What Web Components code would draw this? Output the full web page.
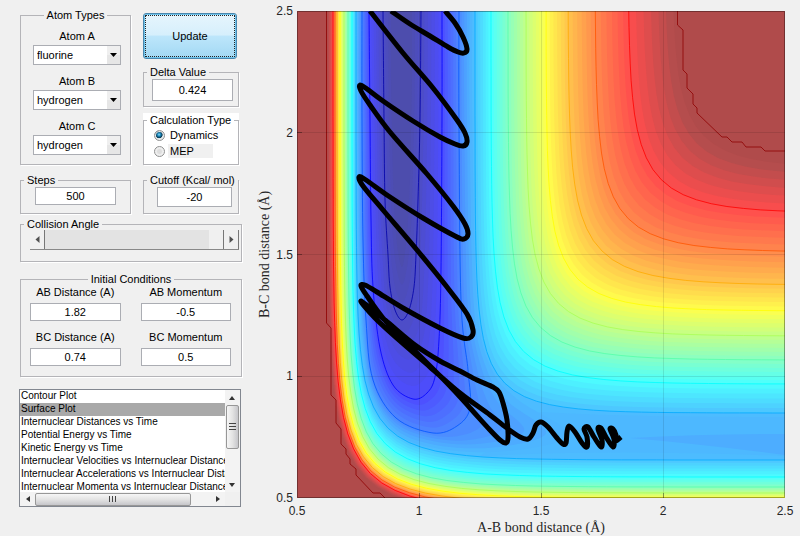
<!DOCTYPE html>
<html lang="en">
<head>
<meta charset="utf-8">
<title>Atom dynamics</title>
<style>
body { margin: 0; background: #f0f0f0; color: #000; font: 11px/12px "Liberation Sans", Arial, sans-serif; }
</style>
</head>
<body>
<dynamics-app></dynamics-app>
<script>
const define = (name, html, setup) => customElements.define(name, class extends HTMLElement {
  connectedCallback() {
    if (this.shadowRoot) return;
    const root = this.attachShadow({ mode: 'open' });
    const tpl = document.createElement('template');
    tpl.innerHTML = '<style>*{box-sizing:border-box}:host([hidden]){display:none}input,select,button{font:inherit;color:inherit;margin:0}</style>' +
      (typeof html === 'function' ? html(this) : html);
    root.append(tpl.content.cloneNode(true));
    if (setup) setup(root, this);
  }
});

define('group-box', el => `
<style>
:host { display: block; }
fieldset { margin: 0; padding: 0; min-width: 0; height: 100%; border: 1px solid #b4b4b8; box-shadow: 1px 1px 0 #fff; }
legend { padding: 0 3px; margin-left: 3px; line-height: 12px; white-space: nowrap; }
:host([center]) legend { margin: 0 auto; }
</style>
<fieldset><legend>${el.getAttribute('legend')}</legend><slot></slot></fieldset>`);

define('number-field', el => `
<style>
:host { display: flex; flex-direction: column; gap: 5px; }
label { text-align: center; white-space: nowrap; }
input { width: 100%; height: var(--field-height, 18px); border: 1px solid #abadb3; background: #fff; text-align: center; padding: 0; border-radius: 0; }
</style>
${el.hasAttribute('label') ? `<label for="f">${el.getAttribute('label')}</label>` : ''}
<input id="f" type="text" value="${el.getAttribute('value')}"${el.hasAttribute('name') ? ` aria-label="${el.getAttribute('name')}"` : ''}>`);

define('atom-picker', el => `
<style>
:host { display: flex; flex-direction: column; gap: 3px; }
label { text-align: center; }
.box { display: grid; }
.box > * { grid-area: 1 / 1; }
select { appearance: none; width: 100%; height: 20px; border: 1px solid #abadb3; border-radius: 0; background: #fff; padding: 0 16px 0 3px; }
svg { justify-self: end; align-self: center; margin-right: 1px; width: 13px; height: 18px; pointer-events: none; }
</style>
<label for="s">${el.getAttribute('label')}</label>
<div class="box"><select id="s">${['fluorine', 'hydrogen'].map(a => `<option${a === el.getAttribute('value') ? ' selected' : ''}>${a}</option>`).join('')}</select>
<svg viewBox="0 0 13 18"><rect width="13" height="18" fill="#e6e6e6"/><rect width="13" height="9" fill="#efefef"/><path d="M3 7h7L6.500 11z" fill="#000"/></svg></div>`);

define('push-button', `
<style>
:host { display: block; }
button { display: block; width: 100%; height: 46px; border: 1px solid #4a87ae; border-radius: 3px; padding: 1px;
  background: linear-gradient(#e6f5fd 0%, #d6effc 48%, #bde6fb 50%, #a2d8f3 100%); box-shadow: inset 0 0 0 1px #6fc4ec; }
span { display: grid; place-items: center; height: 100%; border: 1px dotted #222; }
</style>
<button type="button"><span><slot></slot></span></button>`);

define('calc-choice', `
<style>
:host { display: flex; flex-direction: column; gap: 2px; padding: 2px 0 6px 8px; }
label { display: flex; align-items: center; gap: 5px; width: 61px; height: 14px; padding-left: 2px; white-space: nowrap; }
label.off { background: linear-gradient(90deg, #fff 16px, #f0f0f0 16px); }
input { appearance: none; flex: none; width: 11px; height: 11px; border: 1px solid #8e8f8f; border-radius: 50%; background: radial-gradient(circle, #ddd 30%, #fff 70%); box-shadow: inset 0 0 0 1px #eee; }
input:checked { background: radial-gradient(circle at 45% 40%, #8fe0ff 0, #1b86b9 22%, #083850 44%, #dfe6ea 54%); }
</style>
<label><input type="radio" name="calc" checked>Dynamics</label>
<label class="off"><input type="radio" name="calc">MEP</label>`);

define('angle-slider', `
<style>
:host { display: flex; height: 20px; border-bottom: 1px solid #888; }
button { flex: none; width: 15px; padding: 0; border: 0; border-right: 1px solid #777; background: #f0f0f0; display: grid; place-items: center; }
svg { width: 5px; height: 8px; }
input { appearance: none; flex: 1; min-width: 0; height: 19px; background: #e3e3e3; border-radius: 0; }
input::-webkit-slider-thumb { appearance: none; width: 15px; height: 19px; background: #f0f0f0; border-right: 1px solid #777; }
</style>
<button type="button" aria-label="Decrease angle"><svg viewBox="0 0 5 8"><path d="M4.500 0v7L.5 3.500z" fill="#505050"/></svg></button>
<input type="range" min="0" max="180" value="180" aria-label="Collision Angle">
<button type="button" aria-label="Increase angle"><svg viewBox="0 0 5 8"><path d="M.5 0v7l4-3.500z" fill="#505050"/></svg></button>`);

define('plot-list', `
<style>
:host { display: grid; grid-template-columns: 1fr 15px; grid-template-rows: 102px 14px; border: 1px solid #828790; background: #fff; }
.view { overflow: hidden; }
select { display: block; width: 100%; height: 104px; border: 0; border-radius: 0; padding: 0; background: #fff; overflow: hidden; outline: 0; scrollbar-width: none; }
option { min-height: 13px; height: 13px; font-size: 10px; line-height: 13px; padding: 0 0 0 1px; white-space: nowrap; color: #000; }
option:checked { background: #a9a9a9 linear-gradient(#a9a9a9, #a9a9a9); color: #000; }
.v, .h { display: flex; align-items: center; background: #f3f3f3; }
.v { flex-direction: column; }
.corner { background: #f0f0f0; }
.end { flex: none; display: grid; place-items: center; width: 15px; height: 15px; padding: 0; border: 0; background: none; }
.thumb { display: grid; place-items: center; border: 1px solid #979797; border-radius: 2px; }
.v .thumb { width: 13px; height: 44px; background: linear-gradient(90deg, #f6f6f6, #e3e3e3 50%, #c6c6ca); }
.h .thumb { width: 156px; height: 13px; background: linear-gradient(#f6f6f6, #e3e3e3 50%, #c6c6ca); }
.v .space, .h .space { flex: 1; }
svg { display: block; }
</style>
<div class="view"><select size="8" aria-label="Plot type">
<option>Contour Plot</option><option selected>Surface Plot</option><option>Internuclear Distances vs Time</option>
<option>Potential Energy vs Time</option><option>Kinetic Energy vs Time</option>
<option>Internuclear Velocities vs Internuclear Distance</option><option>Internuclear Accelerations vs Internuclear Distance</option>
<option>Internuclear Momenta vs Internuclear Distance</option></select></div>
<div class="v"><button class="end" aria-label="Scroll up"><svg width="7" height="4"><path d="M0 4h6L3 0z" fill="#333"/></svg></button>
<div class="thumb"><svg width="7" height="8"><path d="M0 .5h7M0 3.500h7M0 6.500h7" stroke="#444"/></svg></div><div class="space"></div>
<button class="end" aria-label="Scroll down"><svg width="7" height="4"><path d="M0 0h6L3 4z" fill="#333"/></svg></button></div>
<div class="h"><button class="end" aria-label="Scroll left"><svg width="4" height="7"><path d="M4 0v6L0 3z" fill="#333"/></svg></button>
<div class="thumb"><svg width="8" height="6"><path d="M.5 0v6M3.500 0v6M6.500 0v6" stroke="#444"/></svg></div><div class="space"></div>
<button class="end" aria-label="Scroll right"><svg width="4" height="7"><path d="M0 0v6l4-3z" fill="#333"/></svg></button></div>
<div class="corner"></div>`);

/* ---- potential energy surface ---- */
const X0 = 297, Y0 = 11;
const lerp = (a, b, t) => a + (b - a) * t;
const jet = v => [.75, .5, .25].map(c => Math.max(0, Math.min(1, 1.5 - Math.abs(v - c) * 4)));
const rgb = (v, mix) => 'rgb(' + jet(v).map(c => Math.round(255 * (mix ? c * .7 + .3 : c))) + ')';
const level = i => (i + .5) / 12;

/* Each wall contour obeys exp(-(x-a)/s) + exp(-(b-y)/s) = 1. */
const wall = ([a, b, s]) => {
  const pts = [];
  for (let k = -30; k <= 30; k++) {
    const t = 1 / (1 + Math.exp(-k / 2.6));
    pts.push([a - s * Math.log(1 - t), b + s * Math.log(t)]);
  }
  pts[0][1] = -100; pts[60][0] = 900;
  return pts;
};
const join = pts => pts.map(p => p[0].toFixed(1) + ' ' + p[1].toFixed(1)).join('L');
const band = (a, b) => 'M' + join(wall(a)) + 'L' + join(wall(b).reverse()) + 'Z';
const curve = p => {
  let d = `M${p[0]}`;
  for (let i = 0; i < p.length - 1; i++) {
    const a = p[i - 1] || p[i], b = p[i], c = p[i + 1], e = p[i + 2] || c;
    d += `C${b[0] + (c[0] - a[0]) / 6} ${b[1] + (c[1] - a[1]) / 6} ${c[0] - (e[0] - b[0]) / 6} ${c[1] - (e[1] - b[1]) / 6} ${c[0]} ${c[1]}`;
  }
  return d;
};
/* Levels 3 to 11: [a, b, s] of the outer and the inner wall. */
const outer = [[356, 460, 46], [352, 477, 48], [348, 487, 48], [344, 493, 49], [340, 498, 50], [337, 503, 51], [335, 507, 52], [333, 511, 54], [328, 515, 54]];
const inner = [[475, 413, 43], [491, 384, 47], [508, 360, 47], [526, 336, 47], [546, 311, 46], [568, 285, 49], [595, 252, 48], [628, 213, 48], [672, 168, 46]];
/* Wells, deepest first: level -1 to level 3. */
const wells = [
  [[391,11],[391,80],[392,130],[393,180],[395,220],[398,252],[402,267],[405,252],[408,220],[410,180],[411,130],[412,80],[412,11]],
  [[383,11],[384,120],[385,200],[388,255],[390,287],[395,310],[402,320],[409,310],[414,287],[416,255],[418,200],[420,120],[421,11]],
  [[369,11],[370,120],[371,220],[373,287],[380,348],[393,385],[413,399],[427,393],[435,377],[439,340],[441,270],[442,120],[442,11]],
  [[362,11],[362,120],[363,240],[366,320],[373,380],[396,418],[433,433],[457,426],[470,408],[468,370],[461,300],[459,120],[459,11]],
  [[356,11],[356,120],[358,260],[362,355],[376,410],[413,446],[500,456],[590,438],[526,397],[495,366],[480,303],[475,120],[475,11]]
];
const STEPS = 6;
function surface() {
  let fills = `<rect x="${X0}" y="${Y0}" width="488" height="487" fill="#b04b4b"/>`, lines = '';
  const mix = (L, i, t) => L[i].map((v, k) => lerp(v, L[i + 1][k], t));
  for (let i = 7; i >= 0; i--) for (let k = STEPS; k >= 1; k--) {
    const t = k / STEPS, rise = (t - .5 / STEPS) * (i === 7 ? 1.35 : 1);
    fills += `<path d="${band(mix(outer, i, t), mix(inner, i, t))}" fill="${rgb(level(i + 3 + rise), 1)}"/>`;
  }
  fills += `<path d="${band(outer[0], inner[0])}" fill="${rgb(level(2.88), 1)}"/>`;
  fills += `<path d="M480 456Q620 449 785 456V417Q620 417 540 412Z" fill="${rgb(level(2.8), 1)}"/>`;
  for (let i = 3; i >= 0; i--) {
    const n = i ? STEPS : 3;
    for (let k = i === 3 ? n - 1 : n; k >= 1; k--)
      fills += `<path d="${curve(wells[i].map((p, j) => [lerp(p[0], wells[i + 1][j][0], k / n), lerp(p[1], wells[i + 1][j][1], k / n)]))}Z" fill="${rgb(i ? level(i - 1 + (k - .5) / n) : .01 + .01 * k, 1)}"/>`;
  }
  fills += `<path d="${curve(wells[0])}Z" fill="${rgb(.01, 1)}"/>`;
  fills += `<path d="M630 438Q700 434 785 434V455Q700 444 630 438Z" fill="${rgb(level(2.62), 1)}"/>`;
  for (let i = 0; i < 8; i++) for (const L of [outer, inner])
    lines += `<path d="M${join(wall(L[i]))}" stroke="${rgb(level(i + 3))}"/>`;
  for (let i = 1; i < 4; i++) lines += `<path d="${curve(wells[i])}" stroke="${rgb(level(i - 1))}"/>`;
  lines += `<path stroke="#8f0000" d="M326.500 11V323L331 328V395L336 400V423L341 429V444L346 449V454L350 459V464L356 469V475L373 493H380L385 498M677.500 11V25L683 30V70L687 74V88L693 94V104L697 108V113L722 137H727L732 142H742L746 147H761L765 151H785"/>`;
  return fills + `<g fill="none" stroke-opacity=".8">${lines}</g>`;
}
const tracks = [
  [[391,11],[410,24],[430,36],[448,47],[458,52],[464,53],[467,49],[463,37],[455,23],[445,11]],
  [[370,11],[403,53],[433,88],[457,120],[465,133],[467,142],[463,146],[455,144],[440,137],[413,121],[383,101],[367,89],[360,85],[361,91],[370,105],[390,132],[427,174],[453,206],[465,224],[468,234],[464,239],[455,236],[423,218],[390,197],[366,180],[359,177],[363,186],[383,210],[417,250],[447,287],[467,314],[473,330],[471,337],[463,338],[440,328],[403,308],[377,292],[365,285],[361,286],[367,296],[383,318],[405,341],[447,383],[470,408],[490,430],[500,440],[506,443],[508,438],[507,420],[503,403],[499,392],[493,387],[477,380],[460,371],[440,361],[415,345],[385,320],[361,301],[375,318],[400,341],[430,367],[460,393],[490,415],[508,429],[520,437],[528,439],[533,433],[536,425],[541,422],[548,427],[557,438],[563,444],[566,443],[567,432],[569,426],[575,432],[582,443],[587,447],[587,437],[584,429],[588,427],[594,437],[601,447],[602,440],[598,429],[601,428],[606,437],[613,447],[614,439],[610,429],[613,429],[616,435],[616,441],[621,437]]
];
define('surface-plot', `
<style>
:host { display: grid; grid-template-columns: 16px 24px minmax(0, 1fr); grid-template-rows: auto 22px 18px; color: #262626; }
svg { display: block; width: 100%; aspect-ratio: 488 / 487; grid-area: 1 / 3; }
.y, .x { display: flex; justify-content: space-between; font-size: 12px; }
.y { grid-area: 1 / 2; flex-direction: column; margin-right: 4px; }
.y span { height: 0; line-height: 0; text-align: right; }
.x { grid-area: 2 / 3; padding-top: 7px; }
.x span { width: 0; display: flex; justify-content: center; }
.name { font: 14px/16px "Liberation Serif", "Times New Roman", serif; text-align: center; }
.xn { grid-area: 3 / 3; }
.yn { grid-area: 1 / 1; writing-mode: vertical-rl; transform: rotate(180deg); }
</style>
<div class="name yn">B-C bond distance (Å)</div>
<div class="y"><span>2.5</span><span>2</span><span>1.5</span><span>1</span><span>0.5</span></div>
<svg viewBox="297 11 488 487" preserveAspectRatio="none" role="img" aria-label="Potential energy surface with trajectory"></svg>
<div class="x"><span>0.5</span><span>1</span><span>1.5</span><span>2</span><span>2.5</span></div>
<div class="name xn">A-B bond distance (Å)</div>`, root => {
  root.querySelector('svg').innerHTML = surface() +
    `<g fill="none" stroke="#000"><path stroke-opacity=".1" d="M419.500 11V498M541.500 11V498M663.500 11V498M297 132.500H785M297 254.500H785M297 376.500H785"/>
    <path stroke-opacity=".35" d="M419.500 498v-5M541.500 498v-5M663.500 498v-5M297 132.500h5M297 254.500h5M297 376.500h5M297.500 11.500H784.500V497.500H297.500Z"/></g>
    <g fill="none" stroke="#000" stroke-width="5" stroke-linejoin="round">${tracks.map(t => `<path d="${curve(t)}"/>`).join('')}</g>`;
});

define('dynamics-app', `
<style>
:host { display: grid; grid-template-columns: 222px minmax(0, 1fr); column-gap: 15px; padding: 9px 15px 0 20px; }
.side { display: flex; flex-direction: column; }
.top { display: grid; grid-template-columns: 111px 96px; column-gap: 12px; }
.col { display: flex; flex-direction: column; }
.atoms { display: flex; flex-direction: column; gap: 10px; padding: 9px 9px 9px 12px; }
.gap { margin-top: 9px; }
push-button { margin-top: 4px; width: 94px; }
.delta { margin-top: 7px; --field-height: 22px; }
.calc { margin-top: 6px; padding-top: 1px; background: #fff; }
.delta number-field { padding: 1px 5px 5px 8px; }
.steps { padding: 1px 14px 8px; }
.cutoff { padding: 1px 6px 6px 13px; --field-height: 20px; }
.angle { margin-top: 4px; }
angle-slider { margin: 0 2px 11px 9px; }
.start { margin-top: 11px; }
.grid { display: grid; grid-template-columns: 1fr 1fr; gap: 10px 20px; padding: 1px 10px 10px 9px; }
plot-list { margin: 12px 1px 0 -1px; }
surface-plot { padding-top: 2px; }
</style>
<div class="side">
  <div class="top">
    <div class="col">
      <group-box legend="Atom Types" center><div class="atoms">
        <atom-picker label="Atom A" value="fluorine"></atom-picker>
        <atom-picker label="Atom B" value="hydrogen"></atom-picker>
        <atom-picker label="Atom C" value="hydrogen"></atom-picker></div></group-box>
      <group-box class="gap" legend="Steps"><number-field class="steps" name="Steps" value="500"></number-field></group-box>
    </div>
    <div class="col">
      <push-button>Update</push-button>
      <group-box class="delta" legend="Delta Value"><number-field name="Delta Value" value="0.424"></number-field></group-box>
      <group-box class="calc" legend="Calculation Type"><calc-choice></calc-choice></group-box>
      <group-box class="gap" legend="Cutoff (Kcal/ mol)"><number-field class="cutoff" name="Cutoff (Kcal/ mol)" value="-20"></number-field></group-box>
    </div>
  </div>
  <group-box class="angle" legend="Collision Angle"><angle-slider></angle-slider></group-box>
  <group-box class="start" legend="Initial Conditions" center><div class="grid">
    <number-field label="AB Distance (A)" value="1.82"></number-field>
    <number-field label="AB Momentum" value="-0.5"></number-field>
    <number-field label="BC Distance (A)" value="0.74"></number-field>
    <number-field label="BC Momentum" value="0.5"></number-field></div></group-box>
  <plot-list></plot-list>
</div>
<surface-plot></surface-plot>`);
</script>
</body>
</html>
